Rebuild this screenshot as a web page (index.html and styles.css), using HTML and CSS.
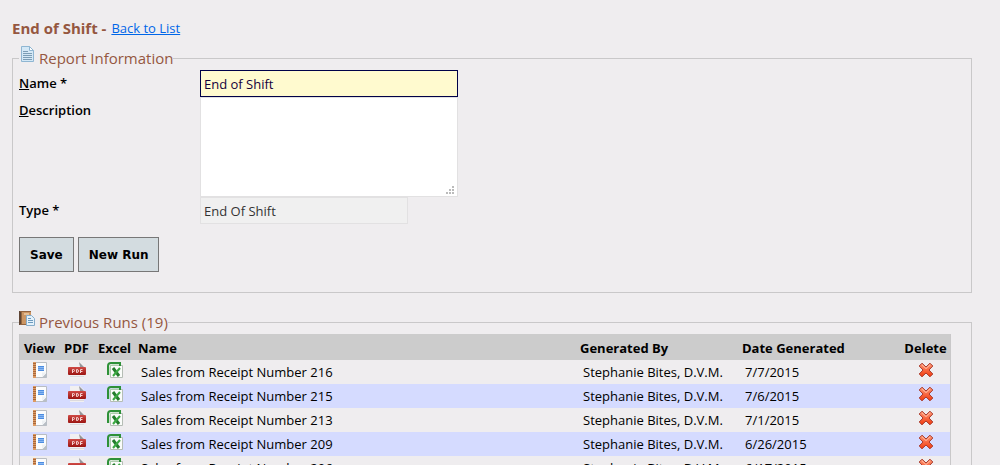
FILE: index.html
```html
<!DOCTYPE html>
<html lang="en">
<head>
   <meta charset="utf-8">
   <title>End of Shift</title>
   <meta name="viewport" content="width=device-width, initial-scale=1">
   <link rel="stylesheet" href="styles.css">
</head>
<body>
   <svg class="sprite" width="0" height="0" aria-hidden="true">
      <defs>
         <linearGradient id="red" x1="0" y1="0" x2="0" y2="1">
            <stop offset="0" stop-color="#cf4a45"/><stop offset="1" stop-color="#9c1512"/>
         </linearGradient>
         <linearGradient id="cross" x1="0" y1="0" x2="0" y2="1">
            <stop offset="0" stop-color="#ff9a78"/><stop offset="1" stop-color="#f2380c"/>
         </linearGradient>
         <symbol id="icon-view" viewBox="0 0 16 16">
            <path d="M2.500.5h12v15h-12z" fill="#fbfcfd" stroke="#b9bdc2"/>
            <path d="M10 15.500l5-5v5z" fill="#b9bfc6"/>
            <path d="M10 15v-4.500h4.500z" fill="#eef1f4"/>
            <path d="M1 0h3v16H1z" fill="#dd9a62"/>
            <path d="M1 1.500h3M1 3.500h3M1 5.500h3M1 7.500h3M1 9.500h3M1 11.500h3M1 13.500h3" stroke="#a9683b"/>
            <path d="M6 4.500h6M6 8.500h6" stroke="#4c8ce0"/>
            <path d="M6 6.500h6" stroke="#8ab8f3" stroke-width="3"/>
            <path d="M6 6.500h6" stroke="#5b97e6"/>
         </symbol>
         <symbol id="icon-pdf" viewBox="0 0 18 16">
            <path d="M2 0h10l4 4v12H2z" fill="#f1f0f1"/>
            <path d="M11 0l5 5h-4z" fill="#96969a"/>
            <path d="M2 14.500h14" stroke="#dcdadd"/>
            <rect x="0" y="5" width="18" height="8" rx="1" fill="url(#red)"/>
            <path d="M4.500 11v-3.500h1q1 0 1 1t-1 1h-1M8.500 7.500v3h.5q1.500 0 1.500-1.500t-1.500-1.500zM12.500 11v-3.500h2M12.500 9.500h2" fill="none" stroke="#f5d2d0"/>
         </symbol>
         <symbol id="icon-excel" viewBox="0 0 16 16">
            <path d="M3.500 3.500h12v12h-12z" fill="#fafcfa" stroke="#b5bdb5"/>
            <path d="M1 13V4q0-3 3-3h9v3" fill="none" stroke="#2e9138" stroke-width="2"/>
            <path d="M3 13V5.500Q3 3 5.500 3H12" fill="none" stroke="#a9d9a8"/>
            <path d="M6 6l6 8" stroke="#237c2b" stroke-width="3"/>
            <path d="M13 6l-7 8" stroke="#3ba842" stroke-width="2"/>
         </symbol>
         <symbol id="icon-delete" viewBox="0 0 16 16">
            <path d="M4 1.200L8 5l4-3.800L14.800 4 11 8l3.800 4-2.800 2.800L8 11l-4 3.800L1.200 12 5 8 1.200 4z" fill="url(#cross)" stroke="#a83a2c" stroke-linejoin="round"/>
            <path d="M4 2.800l4 3.800 4-3.800" fill="none" stroke="#ffc0a8"/>
         </symbol>
      </defs>
   </svg>

   <div class="page-title">
      <h1>End of Shift -</h1>
      <a href="#list">Back to List</a>
   </div>

   <form class="report">
      <fieldset>
         <legend>
            <svg class="legend-icon" width="16" height="16" viewBox="0 0 16 16">
               <path d="M2.500.5h8l4 4v11h-12z" fill="#d4e8f6" stroke="#8fb6d2"/>
               <path d="M10.500.5v4h4z" fill="#fff" stroke="#8fb6d2"/>
               <path d="M4 5.500h5M4 7.500h9M4 9.500h9M4 11.500h9M4 13.500h9" stroke="#7c9db5"/>
            </svg>
            Report Information
         </legend>
         <div class="fields">
            <label for="name"><u>N</u>ame *</label>
            <input class="text active" id="name" type="text" value="End of Shift">
            <label for="description"><u>D</u>escription</label>
            <div class="area">
               <textarea class="text" id="description"></textarea>
               <svg class="grip" width="8" height="8" viewBox="0 0 8 8"><path d="M6 0h2v2H6zM3 3h2v2H3zM6 3h2v2H6zM0 6h2v2H0zM3 6h2v2H3zM6 6h2v2H6z" fill="#bbb"/></svg>
            </div>
            <label for="type">Type *</label>
            <input class="text type" id="type" type="text" value="End Of Shift" disabled>
         </div>
         <div class="buttons">
            <button type="submit">Save</button>
            <button type="button">New Run</button>
         </div>
      </fieldset>
   </form>

   <fieldset class="runs">
      <legend>
         <svg class="legend-icon" width="16" height="16" viewBox="0 0 16 16">
            <path d="M2 1h10v14H2z" fill="#cb9562"/>
            <path d="M0 1h2v14H0z" fill="#5f4534"/>
            <path d="M2 1h1v14H2z" fill="#94683f"/>
            <path d="M1 1.500h11M1 14.500h8" stroke="#92633e"/>
            <path d="M5 3h5v2H5z" fill="#e6bf95"/>
            <path d="M7.500 5.500h5l3 3v7h-8z" fill="#e3f1fb" stroke="#86acc9"/>
            <path d="M9 8.500h3M9 10.500h5M9 12.500h5" stroke="#6d9abd"/>
         </svg>
         Previous Runs (19)
      </legend>
      <table>
         <colgroup>
            <col class="col-view"><col class="col-pdf"><col class="col-excel"><col>
            <col class="col-by"><col class="col-date"><col class="col-delete">
         </colgroup>
         <thead>
            <tr>
               <th class="center">View</th>
               <th class="center">PDF</th>
               <th class="center">Excel</th>
               <th>Name</th>
               <th>Generated By</th>
               <th>Date Generated</th>
               <th class="center">Delete</th>
            </tr>
         </thead>
         <tbody>
            <tr>
               <td class="icon"><a href="#view" aria-label="View"><svg width="16" height="16"><use href="#icon-view"/></svg></a></td>
               <td class="icon"><a href="#pdf" aria-label="PDF"><svg width="18" height="16"><use href="#icon-pdf"/></svg></a></td>
               <td class="icon"><a href="#excel" aria-label="Excel"><svg width="16" height="16"><use href="#icon-excel"/></svg></a></td>
               <td>Sales from Receipt Number 216</td>
               <td>Stephanie Bites, D.V.M.</td>
               <td>7/7/2015</td>
               <td class="icon"><a href="#delete" aria-label="Delete"><svg width="16" height="16"><use href="#icon-delete"/></svg></a></td>
            </tr>
            <tr>
               <td class="icon"><a href="#view" aria-label="View"><svg width="16" height="16"><use href="#icon-view"/></svg></a></td>
               <td class="icon"><a href="#pdf" aria-label="PDF"><svg width="18" height="16"><use href="#icon-pdf"/></svg></a></td>
               <td class="icon"><a href="#excel" aria-label="Excel"><svg width="16" height="16"><use href="#icon-excel"/></svg></a></td>
               <td>Sales from Receipt Number 215</td>
               <td>Stephanie Bites, D.V.M.</td>
               <td>7/6/2015</td>
               <td class="icon"><a href="#delete" aria-label="Delete"><svg width="16" height="16"><use href="#icon-delete"/></svg></a></td>
            </tr>
            <tr>
               <td class="icon"><a href="#view" aria-label="View"><svg width="16" height="16"><use href="#icon-view"/></svg></a></td>
               <td class="icon"><a href="#pdf" aria-label="PDF"><svg width="18" height="16"><use href="#icon-pdf"/></svg></a></td>
               <td class="icon"><a href="#excel" aria-label="Excel"><svg width="16" height="16"><use href="#icon-excel"/></svg></a></td>
               <td>Sales from Receipt Number 213</td>
               <td>Stephanie Bites, D.V.M.</td>
               <td>7/1/2015</td>
               <td class="icon"><a href="#delete" aria-label="Delete"><svg width="16" height="16"><use href="#icon-delete"/></svg></a></td>
            </tr>
            <tr>
               <td class="icon"><a href="#view" aria-label="View"><svg width="16" height="16"><use href="#icon-view"/></svg></a></td>
               <td class="icon"><a href="#pdf" aria-label="PDF"><svg width="18" height="16"><use href="#icon-pdf"/></svg></a></td>
               <td class="icon"><a href="#excel" aria-label="Excel"><svg width="16" height="16"><use href="#icon-excel"/></svg></a></td>
               <td>Sales from Receipt Number 209</td>
               <td>Stephanie Bites, D.V.M.</td>
               <td>6/26/2015</td>
               <td class="icon"><a href="#delete" aria-label="Delete"><svg width="16" height="16"><use href="#icon-delete"/></svg></a></td>
            </tr>
            <tr>
               <td class="icon"><a href="#view" aria-label="View"><svg width="16" height="16"><use href="#icon-view"/></svg></a></td>
               <td class="icon"><a href="#pdf" aria-label="PDF"><svg width="18" height="16"><use href="#icon-pdf"/></svg></a></td>
               <td class="icon"><a href="#excel" aria-label="Excel"><svg width="16" height="16"><use href="#icon-excel"/></svg></a></td>
               <td>Sales from Receipt Number 206</td>
               <td>Stephanie Bites, D.V.M.</td>
               <td>6/17/2015</td>
               <td class="icon"><a href="#delete" aria-label="Delete"><svg width="16" height="16"><use href="#icon-delete"/></svg></a></td>
            </tr>
         </tbody>
      </table>
   </fieldset>
</body>
</html>
```
FILE: styles.css
```css
*{
    box-sizing: border-box;
}
body{
    margin: 0;
    padding: 16px 28px 0 12px;
    background: #efedef;
    color: #000;
    font-family: "Segoe UI", "Open Sans", "Noto Sans", sans-serif;
    font-size: 13px;
}
.sprite{
    display: block;
}
.page-title{
    display: flex;
    align-items: center;
    gap: 5px;
    height: 24px;
}
h1{
    margin: 0;
    color: #95573f;
    font-size: 15px;
}
.page-title a{
    color: #0066e8;
}
fieldset{
    margin: 0;
    padding: 0 6px 20px;
    border: 1px solid #c9c8c9;
}
legend{
    display: flex;
    align-items: center;
    gap: 4px;
    height: 24px;
    padding: 0;
    color: #95573f;
    font-size: 15px;
}
.legend-icon{
    align-self: flex-start;
}
.report{
    padding-top: 6px;
}
.fields{
    display: grid;
    grid-template-columns: 181px 1fr;
}
.fields label{
    font-weight: 600;
    line-height: 27px;
}
.text{
    display: block;
    width: 258px;
    height: 27px;
    padding: 0 3px;
    border: 1px solid #e2e1e2;
    background: #fff;
    color: #222;
    font: inherit;
    outline: 0;
}
.active{
    border-color: #000048;
    background: #fffacf;
    color: #14003c;
}
.area{
    position: relative;
    width: 258px;
}
.area textarea{
    height: 100px;
    resize: none;
}
.grip{
    position: absolute;
    right: 4px;
    bottom: 3px;
}
.type{
    width: 208px;
    background: #f0f0f0;
    color: #333;
}
.buttons{
    display: flex;
    gap: 4px;
    padding-top: 13px;
}
button{
    height: 35px;
    padding: 0 10px;
    border: 1px solid #777;
    background: #d3dce0;
    color: #000;
    font-family: Tahoma, "DejaVu Sans", sans-serif;
    font-size: 12px;
    font-weight: 700;
}
.runs{
    margin-top: 17px;
    padding-right: 20px;
}
table{
    width: 100%;
    table-layout: fixed;
    border-spacing: 0;
    border: solid #c9c8c9;
    border-width: 0 1px;
}
.col-view{
    width: 39px;
}
.col-pdf{
    width: 35px;
}
.col-excel{
    width: 41px;
}
.col-by,
.col-date{
    width: 162px;
}
.col-delete{
    width: 49px;
}
th{
    height: 26px;
    padding: 2px 3px 0;
    background: #ccc;
    text-align: left;
    white-space: nowrap;
}
th.center{
    padding: 2px 0 0;
    text-align: center;
}
td{
    height: 24px;
    padding: 0 6px;
}
tbody tr:nth-child(even){
    background: #d5dbff;
}
.icon{
    padding: 0 0 4px;
    text-align: center;
}
.icon svg{
    display: block;
    margin: 0 auto;
}
```
